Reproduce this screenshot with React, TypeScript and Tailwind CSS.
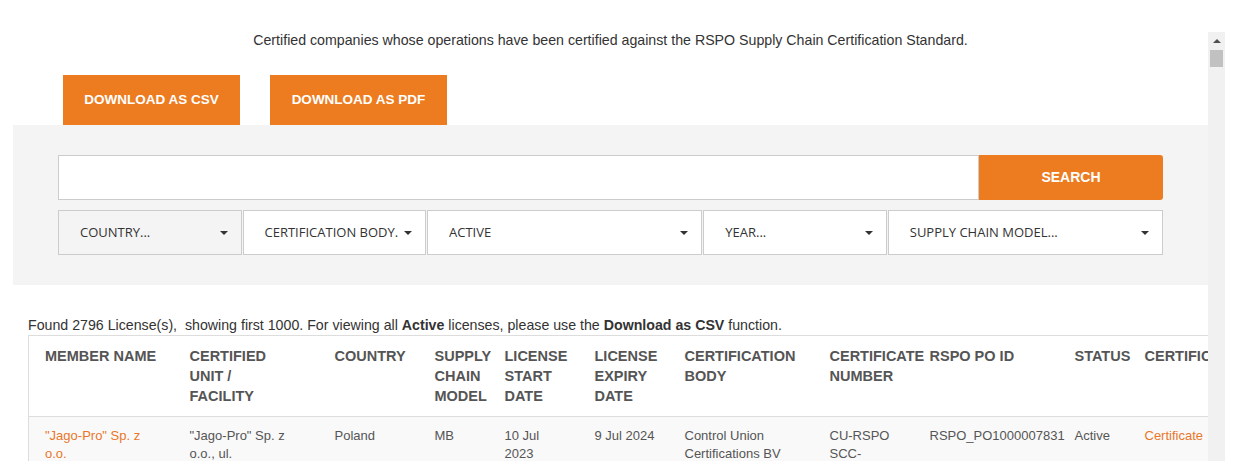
import React from 'react';

const columns: { width: number; label: string[] }[] = [
  { width: 145, label: ['MEMBER NAME'] },
  { width: 145, label: ['CERTIFIED', 'UNIT /', 'FACILITY'] },
  { width: 100, label: ['COUNTRY'] },
  { width: 70, label: ['SUPPLY', 'CHAIN', 'MODEL'] },
  { width: 90, label: ['LICENSE', 'START', 'DATE'] },
  { width: 90, label: ['LICENSE', 'EXPIRY', 'DATE'] },
  { width: 145, label: ['CERTIFICATION', 'BODY'] },
  { width: 100, label: ['CERTIFICATE', 'NUMBER'] },
  { width: 145, label: ['RSPO PO ID'] },
  { width: 70, label: ['STATUS'] },
  { width: 130, label: ['CERTIFICATE'] },
];

const licenses = [
  {
    member: '"Jago-Pro" Sp. z o.o.',
    unit: '"Jago-Pro" Sp. z o.o., ul. Przemysłowa 1, Krapkowice',
    country: 'Poland',
    model: 'MB',
    start: '10 Jul 2023',
    expiry: '9 Jul 2024',
    body: 'Control Union Certifications BV',
    number: 'CU-RSPO SCC-858312',
    poId: 'RSPO_PO1000007831',
    status: 'Active',
  },
];

const filters = [
  { label: 'COUNTRY...', muted: true },
  { label: 'CERTIFICATION BODY.', muted: false },
  { label: 'ACTIVE', muted: false },
  { label: 'YEAR...', muted: false },
  { label: 'SUPPLY CHAIN MODEL...', muted: false },
];

function Caret() {
  return <span className="inline-block h-0 w-0 shrink-0 border-x-[4px] border-t-[4px] border-x-transparent border-t-[#333]" />;
}

function Scrollbar() {
  return (
    <div className="mt-[32px] flex w-[17px] shrink-0 flex-col items-center bg-[#f1f1f1]">
      <div className="flex h-[17px] w-full items-center justify-center">
        <span className="inline-block h-0 w-0 border-x-[4px] border-b-[4px] border-x-transparent border-b-[#505050]" />
      </div>
      <div className="mt-[1px] h-[17px] w-[13px] bg-[#c1c1c1]" />
    </div>
  );
}

export default function App() {
  return (
    <div className="flex h-[461px] overflow-hidden bg-white font-['Liberation_Sans',Arial,sans-serif] text-[14.2px] text-[#333]">
      <div className="w-[1208px] shrink-0 overflow-hidden pl-[13px]">
        <div className="w-[1195px]">
          <p className="pt-[31px] text-center leading-[18px]">
            Certified companies whose operations have been certified against the RSPO Supply Chain Certification Standard.
          </p>

          {/* export buttons */}
          <div className="mt-[26px] flex gap-[30px] pl-[50px]">
            <button className="h-[50px] w-[177px] bg-[#ec7c1f] text-[13.5px] font-bold text-white">DOWNLOAD AS CSV</button>
            <button className="h-[50px] w-[177px] bg-[#ec7c1f] text-[13.5px] font-bold text-white">DOWNLOAD AS PDF</button>
          </div>

          {/* search + filters */}
          <div className="bg-[#f4f4f4] px-[45px] pt-[30px] pb-[30px]">
            <div className="flex h-[45px]">
              <input className="h-full flex-1 border border-[#ccc] bg-white px-3 outline-none" />
              <button className="h-full w-[184px] rounded-r-[3px] bg-[#ec7c1f] text-[14px] font-bold text-white">SEARCH</button>
            </div>
            <div className="mt-[10px] grid grid-cols-[2fr_2fr_3fr_2fr_3fr] gap-[1px] font-['Open_Sans',sans-serif] text-[13px] text-[#333]">
              {filters.map((f) => (
                <div
                  key={f.label}
                  className={`flex h-[45px] items-center justify-between border border-[#ccc] pl-[21px] pr-[13px] ${f.muted ? 'bg-[#f4f4f4]' : 'bg-white'}`}
                >
                  <span className="truncate">{f.label}</span>
                  <Caret />
                </div>
              ))}
            </div>
          </div>

          <div className="pl-[15px]">
            <p className="mt-[31px] leading-[18px]">
              Found 2796 License(s),&nbsp; showing first 1000. For viewing all <b>Active</b> licenses, please use the{' '}
              <b>Download as CSV</b> function.
            </p>
            <table className="mt-[1px] w-[1230px] table-fixed border-collapse border-t border-l border-[#ddd] text-left">
              <colgroup>
                {columns.map((c, i) => (
                  <col key={i} style={{ width: c.width }} />
                ))}
              </colgroup>
              <thead>
                <tr className="border-b border-[#ddd]">
                  {columns.map((c, i) => (
                    <th key={i} className="whitespace-nowrap pt-[10px] pb-[10px] pl-4 align-top text-[14.5px] font-bold leading-5 text-[#555]">
                      {c.label.map((line, j) => (
                        <div key={j}>{line}</div>
                      ))}
                    </th>
                  ))}
                </tr>
              </thead>
              <tbody className="text-[13px] text-[#555]">
                {licenses.map((l) => (
                  <tr key={l.poId} className="bg-[#f9f9f9] align-top leading-[18px]">
                    <td className="pt-[10px] pl-4 pr-[10px] text-[#e9772a]">{l.member}</td>
                    <td className="pt-[10px] pl-4 pr-[10px]">{l.unit}</td>
                    <td className="pt-[10px] pl-4 pr-[10px]">{l.country}</td>
                    <td className="pt-[10px] pl-4 pr-[10px]">{l.model}</td>
                    <td className="pt-[10px] pl-4 pr-[10px]">{l.start}</td>
                    <td className="pt-[10px] pl-4 pr-[10px]">{l.expiry}</td>
                    <td className="pt-[10px] pl-4 pr-[10px]">{l.body}</td>
                    <td className="pt-[10px] pl-4 pr-[10px]">{l.number}</td>
                    <td className="pt-[10px] pl-4 pr-[10px]">{l.poId}</td>
                    <td className="pt-[10px] pl-4 pr-[10px]">{l.status}</td>
                    <td className="pt-[10px] pl-4 pr-[10px] text-[#e9772a]">Certificate</td>
                  </tr>
                ))}
              </tbody>
            </table>
          </div>
        </div>
      </div>
      <Scrollbar />
    </div>
  );
}
